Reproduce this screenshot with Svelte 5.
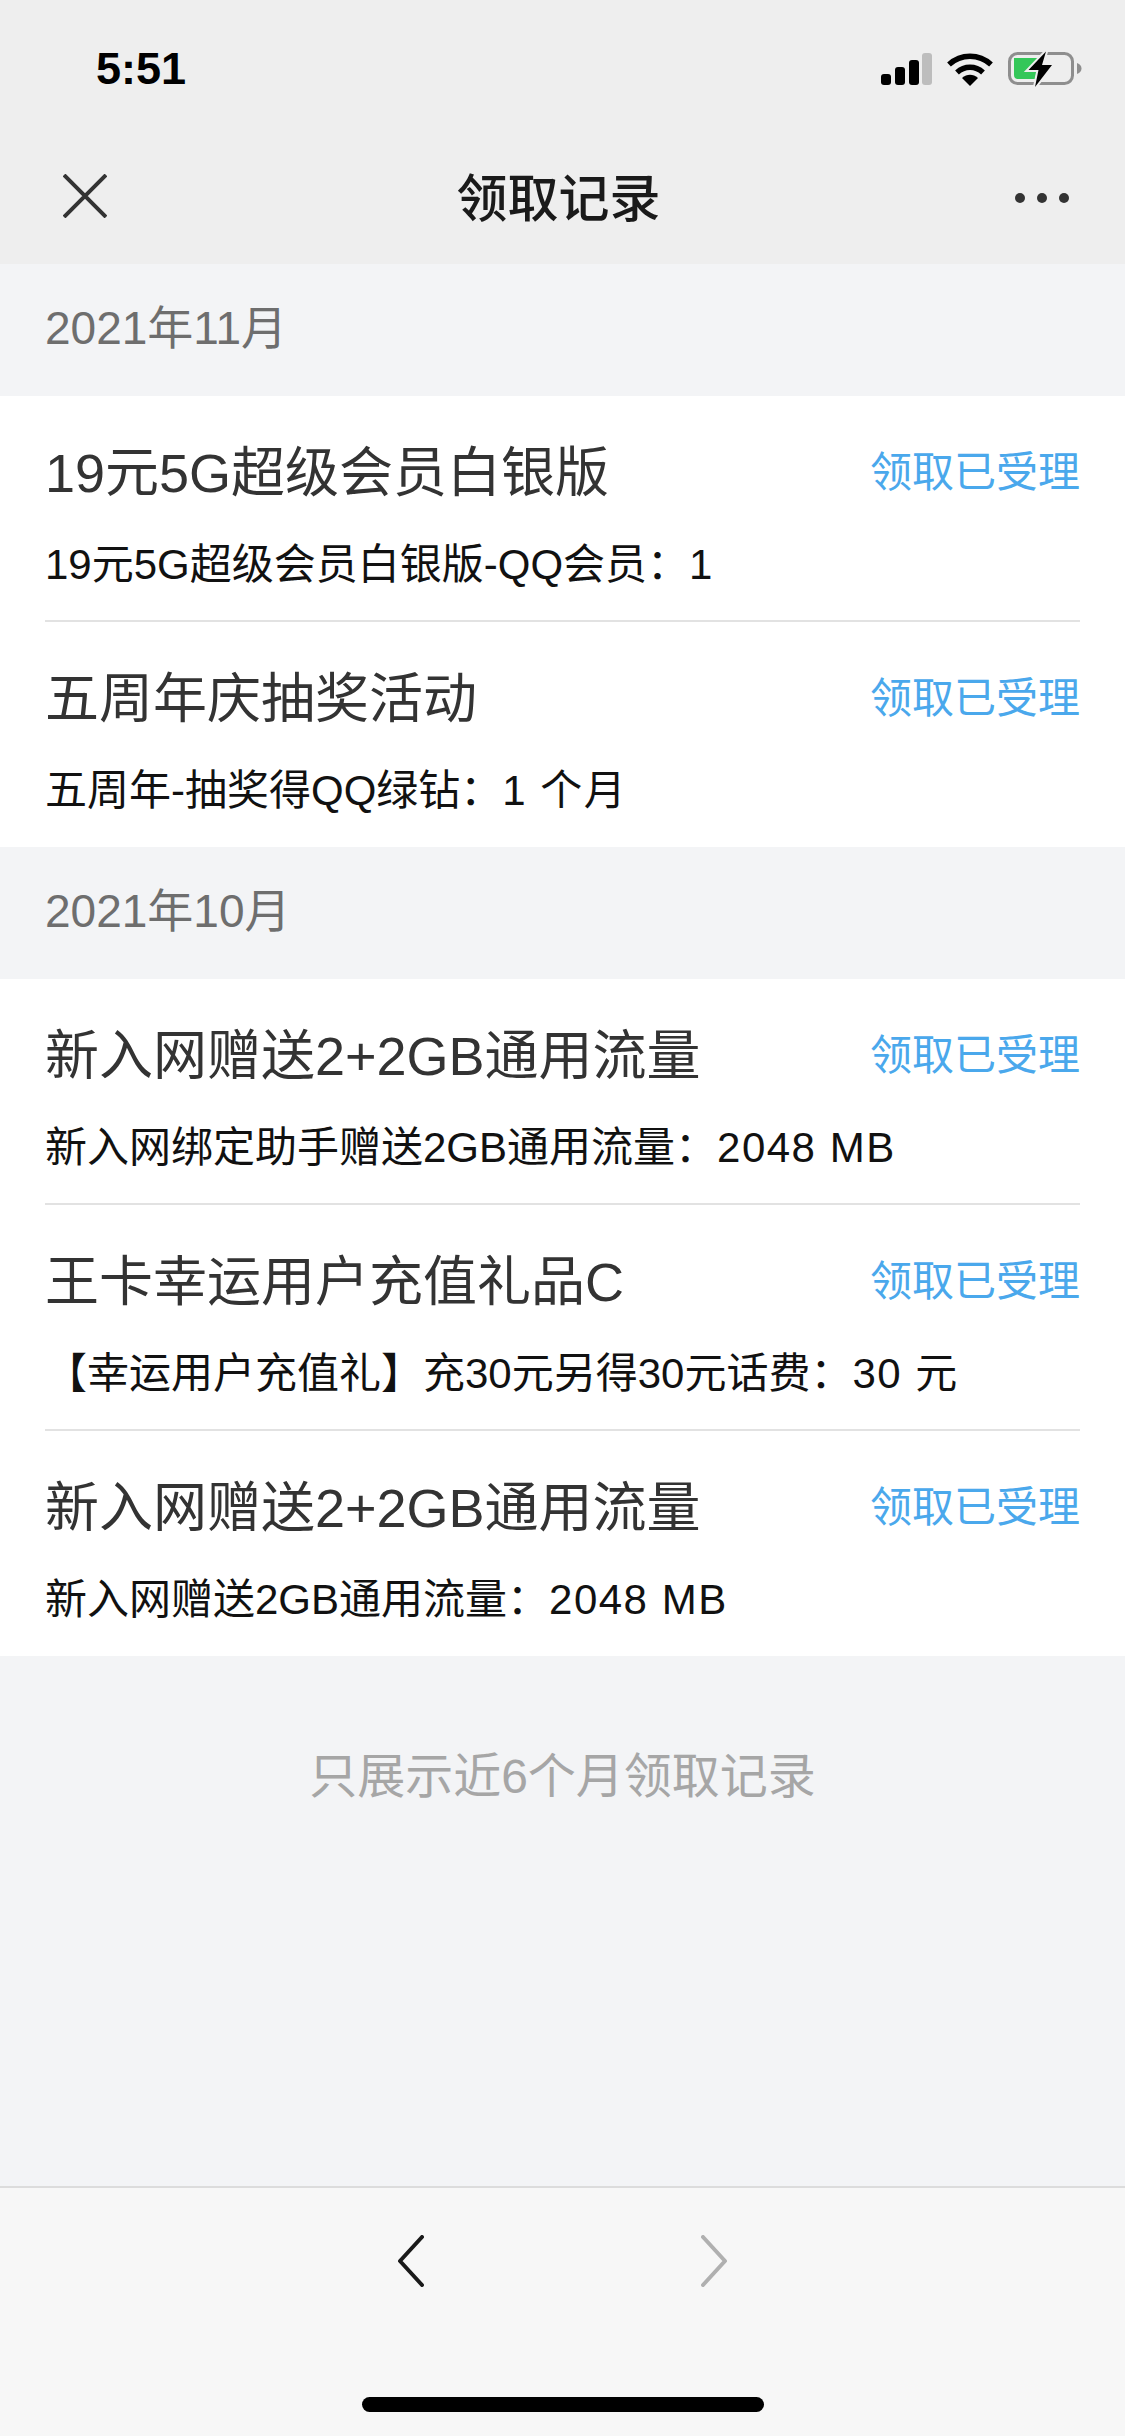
<script>
  const groups = [
    {
      month: '2021年11月',
      items: [
        { title: '19元5G超级会员白银版', detail: '19元5G超级会员白银版-QQ会员：', value: '1' },
        { title: '五周年庆抽奖活动', detail: '五周年-抽奖得QQ绿钻：', value: '1 个月' }
      ]
    },
    {
      month: '2021年10月',
      items: [
        { title: '新入网赠送2+2GB通用流量', detail: '新入网绑定助手赠送2GB通用流量：', value: '2048 MB' },
        { title: '王卡幸运用户充值礼品C', detail: '【幸运用户充值礼】充30元另得30元话费：', value: '30 元' },
        { title: '新入网赠送2+2GB通用流量', detail: '新入网赠送2GB通用流量：', value: '2048 MB' }
      ]
    }
  ];
</script>

<main class="page">
  <header class="top">
    <div class="status">
      <span class="time">5:51</span>
      <div class="status-icons">
        <svg class="signal" width="51" height="32" viewBox="0 0 51 32">
          <rect x="0" y="21" width="10" height="11" rx="3" fill="#000" />
          <rect x="14" y="14" width="10" height="18" rx="3" fill="#000" />
          <rect x="28" y="7" width="10" height="25" rx="3" fill="#000" />
          <rect x="41" y="0" width="10" height="32" rx="3" fill="#bdbdbd" />
        </svg>
        <svg class="wifi" width="46" height="33" viewBox="0 0 46 33">
          <path d="M2 11.500C14 .5 32 .5 44 11.500" fill="none" stroke="#000" stroke-width="5.500" />
          <path d="M10 19.500C17.500 12.500 28.500 12.500 36 19.500" fill="none" stroke="#000" stroke-width="5.500" />
          <path d="M15 25C20 20.600 26 20.600 31 25L23 33Z" fill="#000" />
        </svg>
        <svg class="battery" width="74" height="36" viewBox="0 0 74 36">
          <rect x="1.500" y="2.500" width="63" height="30" rx="8" fill="none" stroke="#8e8e8e" stroke-width="3" />
          <path d="M6 7h27L21 19h8l-2 9H10a4 4 0 0 1-4-4Z" fill="#34c759" />
          <path d="M69 12c3 1 4.500 3 4.500 5.500S72 22 69 23Z" fill="#8e8e8e" />
          <path d="M38 .5 20.500 19h10l-3.500 17 17-22H34Z" fill="#000" stroke="#eeeeee" stroke-width="4" paint-order="stroke" />
        </svg>
      </div>
    </div>
    <nav class="nav">
      <svg class="close" width="44" height="44" viewBox="0 0 44 44">
        <path d="M1 1 43 43M43 1 1 43" stroke="#333" stroke-width="4" fill="none" />
      </svg>
      <h1>领取记录</h1>
      <div class="dots"><i></i><i></i><i></i></div>
    </nav>
  </header>

  {#each groups as group}
    <div class="month">{group.month}</div>
    <ul class="list">
      {#each group.items as item}
        <li class="row">
          <div class="row-head">
            <span class="title">{item.title}</span>
            <span class="state">领取已受理</span>
          </div>
          <div class="detail">{item.detail}<span class="value">{item.value}</span></div>
        </li>
      {/each}
    </ul>
  {/each}

  <p class="note">只展示近6个月领取记录</p>

  <footer class="bottom">
    <div class="arrows">
      <svg width="27" height="52" viewBox="0 0 27 52">
        <path d="M25 2 3 26l22 24" fill="none" stroke="#1a1a1a" stroke-width="4" stroke-linecap="round" stroke-linejoin="round" />
      </svg>
      <svg width="27" height="52" viewBox="0 0 27 52">
        <path d="M2 2l22 24L2 50" fill="none" stroke="#b0b0b0" stroke-width="4" stroke-linecap="round" stroke-linejoin="round" />
      </svg>
    </div>
    <div class="home-bar"></div>
  </footer>
</main>

<style>
  :global(body) {
    margin: 0;
    background: #f3f4f6;
  }

  .page {
    display: flex;
    flex-direction: column;
    width: 1125px;
    height: 2436px;
    overflow: hidden;
    font-family: "Liberation Sans", "Noto Sans CJK SC", sans-serif;
    background: #f3f4f6;
  }

  .top {
    height: 264px;
    background: #eeeeee;
    flex: none;
  }

  .status {
    display: flex;
    justify-content: space-between;
    align-items: center;
    height: 136px;
    padding: 2px 43px 0 96px;
    box-sizing: border-box;
  }

  .time {
    font-size: 45px;
    font-weight: 700;
    color: #000;
  }

  .status-icons {
    display: flex;
    align-items: center;
    gap: 15px;
  }

  .nav {
    position: relative;
    display: flex;
    justify-content: space-between;
    align-items: center;
    height: 120px;
    padding: 0 56px 0 63px;
  }

  h1 {
    position: absolute;
    left: 0;
    right: 8px;
    top: 22px;
    margin: 0;
    text-align: center;
    font-size: 51px;
    font-weight: 500;
    color: #1a1a1a;
  }

  .dots {
    display: flex;
    gap: 12px;
    padding-top: 4px;
  }

  .dots i {
    width: 10px;
    height: 10px;
    border-radius: 50%;
    background: #333;
  }

  .month {
    height: 132px;
    line-height: 128px;
    padding-left: 45px;
    font-size: 46px;
    color: #6e6e6e;
  }

  .list {
    list-style: none;
    margin: 0;
    padding: 0 45px;
    background: #fff;
  }

  .row {
    height: 226px;
    box-sizing: border-box;
    border-bottom: 2px solid #e2e2e2;
  }

  .row:last-child {
    height: 225px;
    border-bottom: 0;
  }

  .row-head {
    display: flex;
    justify-content: space-between;
    align-items: center;
    padding-top: 40px;
    height: 64px;
  }

  .title {
    font-size: 54px;
    color: #333;
  }

  .state {
    font-size: 42px;
    color: #4aa8ec;
  }

  .detail {
    margin-top: 30px;
    font-size: 42px;
    color: #111;
  }

  .value {
    letter-spacing: 1.500px;
  }

  .note {
    margin: 81px 0 0;
    text-align: center;
    font-size: 48px;
    color: #a6a6a6;
  }

  .bottom {
    margin-top: auto;
    height: 250px;
    box-sizing: border-box;
    border-top: 2px solid #dcdcdc;
    background: #f7f7f7;
    display: flex;
    flex-direction: column;
    align-items: center;
  }

  .arrows {
    display: flex;
    gap: 277px;
    padding-top: 47px;
  }

  .home-bar {
    margin-top: 110px;
    width: 402px;
    height: 15px;
    border-radius: 8px;
    background: #000;
  }
</style>
